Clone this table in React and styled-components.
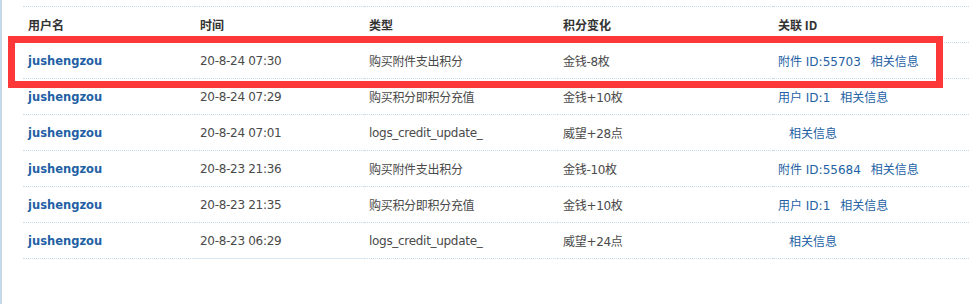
import React from 'react';
import styled, { createGlobalStyle } from 'styled-components';

const GlobalStyle = createGlobalStyle`
  html, body {
    margin: 0;
    padding: 0;
    background: #fff;
    overflow: hidden;
  }
  body {
    font: 12px "DejaVu Sans", "Noto Sans CJK SC", sans-serif;
    color: #444;
  }
`;

const rows = [
  { user: 'jushengzou', time: '20-8-24 07:30', type: '购买附件支出积分', change: '金钱-8枚', ref: '附件 ID:55703' },
  { user: 'jushengzou', time: '20-8-24 07:29', type: '购买积分即积分充值', change: '金钱+10枚', ref: '用户 ID:1' },
  { user: 'jushengzou', time: '20-8-24 07:01', type: 'logs_credit_update_', change: '威望+28点', ref: '' },
  { user: 'jushengzou', time: '20-8-23 21:36', type: '购买附件支出积分', change: '金钱-10枚', ref: '附件 ID:55684' },
  { user: 'jushengzou', time: '20-8-23 21:35', type: '购买积分即积分充值', change: '金钱+10枚', ref: '用户 ID:1' },
  { user: 'jushengzou', time: '20-8-23 06:29', type: 'logs_credit_update_', change: '威望+24点', ref: '' },
];

function App() {
  return (
    <Page>
      <GlobalStyle />
      <Wrap>
        <Table>
          <colgroup>
            <col style={{ width: 172 }} />
            <col style={{ width: 169 }} />
            <col style={{ width: 194 }} />
            <col style={{ width: 215 }} />
            <col />
          </colgroup>
          <thead>
            <tr>
              <Th>用户名</Th>
              <Th>时间</Th>
              <Th>类型</Th>
              <Th>积分变化</Th>
              <Th>关联 ID</Th>
            </tr>
          </thead>
          <tbody>
            {rows.map((r, i) => (
              <tr key={i}>
                <Td><User>{r.user}</User></Td>
                <Td $solid={i === rows.length - 1}>{r.time}</Td>
                <Td>{r.type}</Td>
                <Td>{r.change}</Td>
                <Td>
                  {r.ref ? <Ref>{r.ref}</Ref> : null}
                  <Ref $alone={!r.ref} $after={!!r.ref}>相关信息</Ref>
                </Td>
              </tr>
            ))}
          </tbody>
        </Table>
        <Mark />
      </Wrap>
    </Page>
  );
}

export default App;

const Page = styled.div`
  width: 969px;
  height: 304px;
  box-sizing: border-box;
  border-left: 2px solid #c4d9ea;
  padding: 7px 0 0 21px;
`;

const Wrap = styled.div`
  position: relative;
`;

const Table = styled.table`
  width: 946px;
  table-layout: fixed;
  border-collapse: collapse;
  border-top: 1px dotted #c9dbe8;
  margin-top: -1px;
`;

const Th = styled.th`
  height: 35px;
  padding: 0 0 0 5px;
  text-align: left;
  font-family: "Noto Sans CJK SC", "DejaVu Sans", sans-serif;
  font-size: 12px;
  font-weight: bold;
  color: #333;
  border-bottom: 1px dotted #c9dbe8;
  white-space: nowrap;
`;

const Td = styled.td`
  height: 35px;
  padding: 0 0 0 5px;
  font-size: 12px;
  letter-spacing: -0.3px;
  color: #4a4a4a;
  white-space: nowrap;
  border-bottom: 1px ${p => (p.$solid ? 'solid #dde9f2' : 'dotted #c9dbe8')};
`;

const User = styled.a`
  font-weight: bold;
  font-size: 11.5px;
  letter-spacing: 0;
  color: #235fa5;
  text-decoration: none;
`;

const Ref = styled.a`
  color: #235fa5;
  letter-spacing: 0;
  text-decoration: none;
  margin-left: ${p => (p.$alone ? '11px' : p.$after ? '10px' : '0')};
`;

const Mark = styled.div`
  position: absolute;
  left: -15px;
  top: 30px;
  width: 935px;
  height: 52px;
  box-sizing: border-box;
  border: 7px solid #fe3838;
  pointer-events: none;
`;
